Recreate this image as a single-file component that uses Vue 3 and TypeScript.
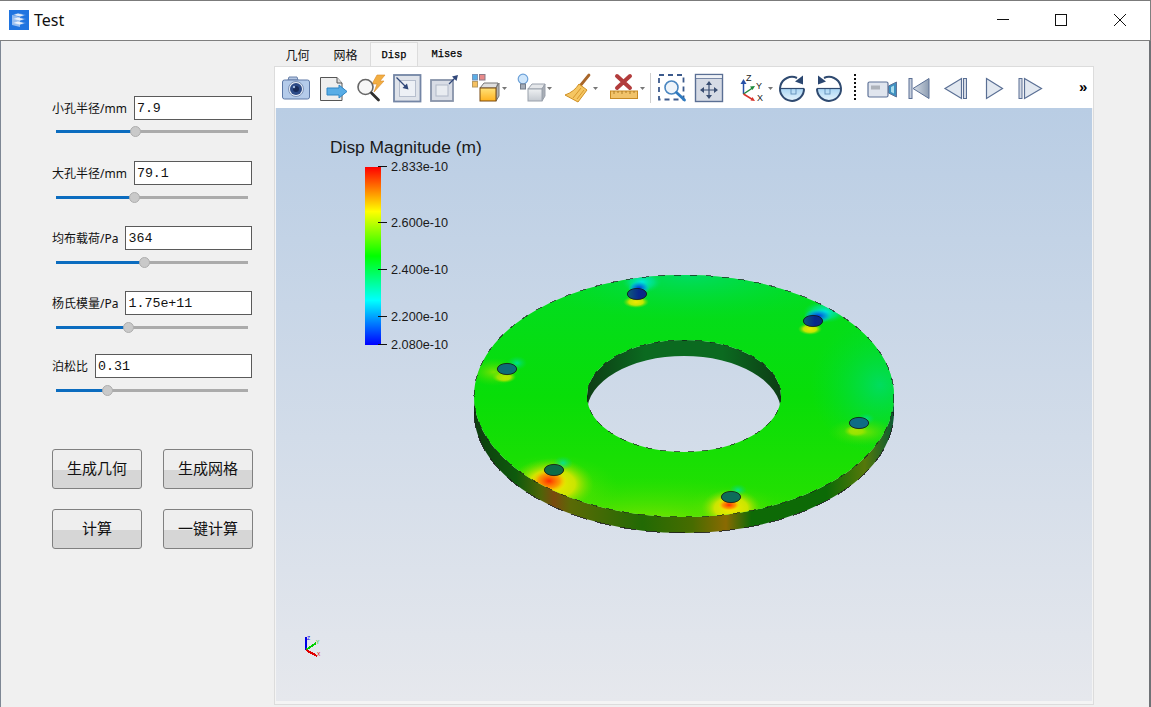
<script setup lang="ts">
interface Param { label: string; value: string; pos: number }
const params: Param[] = [
  { label: '小孔半径/mm', value: '7.9', pos: 79 },
  { label: '大孔半径/mm', value: '79.1', pos: 78 },
  { label: '均布载荷/Pa', value: '364', pos: 88 },
  { label: '杨氏模量/Pa', value: '1.75e+11', pos: 72 },
  { label: '泊松比', value: '0.31', pos: 51 },
]
const actions: string[] = ['生成几何', '生成网格', '计算', '一键计算']
const tabs: string[] = ['几何', '网格', 'Disp', 'Mises']
const ticks = [
  { y: 166, label: '2.833e-10' },
  { y: 222, label: '2.600e-10' },
  { y: 269, label: '2.400e-10' },
  { y: 316, label: '2.200e-10' },
  { y: 344, label: '2.080e-10' },
]
const holes = [
  { x: 637, y: 294, fill: 'url(#hBlue)' },
  { x: 813, y: 321, fill: 'url(#hBlue)' },
  { x: 507, y: 369, fill: '#0e6c78' },
  { x: 859, y: 423, fill: '#0e6c84' },
  { x: 554, y: 470, fill: '#0e6c48' },
  { x: 731, y: 497, fill: '#0e6c5a' },
]
const blobs = [
  { x: 690, y: 276, rx: 170, ry: 44, fill: 'url(#bTeal)' },
  { x: 880, y: 385, rx: 70, ry: 70, fill: 'url(#bTeal)' },
  { x: 650, y: 525, rx: 180, ry: 48, fill: 'url(#bLime)' },
  { x: 642, y: 282, rx: 20, ry: 11, fill: 'url(#bCyan)' },
  { x: 639, y: 288, rx: 11, ry: 7, fill: 'url(#bBlue)' },
  { x: 636, y: 302, rx: 13, ry: 6, fill: 'url(#bYellow)' },
  { x: 825, y: 312, rx: 22, ry: 11, fill: 'url(#bCyan)' },
  { x: 818, y: 316, rx: 14, ry: 7, fill: 'url(#bBlue)' },
  { x: 810, y: 329, rx: 12, ry: 6, fill: 'url(#bYellow)' },
  { x: 517, y: 363, rx: 10, ry: 7, fill: 'url(#bCyanSoft)' },
  { x: 504, y: 377, rx: 12, ry: 6, fill: 'url(#bYellow)' },
  { x: 494, y: 372, rx: 26, ry: 14, fill: 'url(#bLime)' },
  { x: 866, y: 419, rx: 9, ry: 6, fill: 'url(#bCyanSoft)' },
  { x: 856, y: 431, rx: 12, ry: 6, fill: 'url(#bYellow)' },
  { x: 862, y: 432, rx: 34, ry: 14, fill: 'url(#bLime)' },
  { x: 553, y: 490, rx: 66, ry: 36, fill: 'url(#bLime)' },
  { x: 552, y: 484, rx: 42, ry: 26, fill: 'url(#bYellow)' },
  { x: 549, y: 481, rx: 18, ry: 12, fill: 'url(#bRed)' },
  { x: 563, y: 463, rx: 10, ry: 7, fill: 'url(#bCyanSoft)' },
  { x: 731, y: 512, rx: 50, ry: 26, fill: 'url(#bLime)' },
  { x: 731, y: 508, rx: 30, ry: 19, fill: 'url(#bYellow)' },
  { x: 729, y: 505, rx: 11, ry: 6, fill: 'url(#bRed)' },
  { x: 738, y: 490, rx: 9, ry: 6, fill: 'url(#bCyanSoft)' },
]
</script>

<template>
  <div class="window">
    <header class="titlebar">
      <svg class="app-icon" width="20" height="20" viewBox="0 0 20 20">
        <rect width="20" height="20" fill="#1f74e0" />
        <path d="M3 5l6-2 8 2-6 2zM3 9l6-2 8 2-6 2zM3 13l6-2 8 2-6 2z" fill="#dfeaf8" stroke="#1f74e0" stroke-width=".7" />
        <path d="M3 5v10l8 2V7z" fill="#f4f8fd" opacity=".55" />
      </svg>
      <span class="title">Test</span>
      <div class="controls">
        <div class="ctl">
          <svg width="14" height="14" viewBox="0 0 14 14"><path d="M1 6.500h12" stroke="#111" fill="none" /></svg>
        </div>
        <div class="ctl">
          <svg width="14" height="14" viewBox="0 0 14 14"><rect x="1.500" y="1.500" width="11" height="11" stroke="#111" fill="none" /></svg>
        </div>
        <div class="ctl">
          <svg width="14" height="14" viewBox="0 0 14 14"><path d="M1 1l12 12M13 1L1 13" stroke="#111" fill="none" /></svg>
        </div>
      </div>
    </header>

    <div class="body">
      <aside class="side">
        <div v-for="p in params" :key="p.label" class="param">
          <div class="row">
            <label class="label">{{ p.label }}</label>
            <div class="field">{{ p.value }}</div>
          </div>
          <div class="slider">
            <div class="track-on" :style="{ width: p.pos + 'px' }"></div>
            <div class="thumb" :style="{ left: p.pos - 5 + 'px' }"></div>
          </div>
        </div>
        <div class="actions">
          <button v-for="a in actions" :key="a" class="btn">{{ a }}</button>
        </div>
      </aside>

      <main class="main">
        <nav class="tabs">
          <div v-for="t in tabs" :key="t" class="tab" :class="{ active: t === 'Disp', latin: t === 'Disp' || t === 'Mises' }">{{ t }}</div>
        </nav>
        <section class="pane">
          <div class="toolbar">
            <svg class="tool" width="36" height="32" viewBox="279 71 36 32">
              <path d="M288 79l1-3h8l1 3z" fill="#b4c6e2" stroke="#6b82aa" />
              <rect x="282.500" y="79" width="27" height="19" rx="2" fill="#b4cbea" stroke="#5e79a6" />
              <circle cx="296" cy="88" r="7.500" fill="#e8edf5" stroke="#7d93b8" />
              <circle cx="296" cy="88" r="6" fill="#2c4a86" />
              <circle cx="296" cy="88" r="3" fill="#172a58" />
              <circle cx="294" cy="86" r="1.200" fill="#9db8e0" />
            </svg>
            <svg class="tool" width="37" height="32" viewBox="315 71 37 32">
              <path d="M320.500 76.500H337l5 5.500v17.500h-21.500z" fill="#eeeeee" stroke="#555" />
              <path d="M337 76.500v5.500h5" fill="#ddd" stroke="#555" />
              <path d="M327 87h12v-3l8 6.500-8 6.500v-3h-12z" fill="#58ade6" stroke="#2f86c5" />
            </svg>
            <svg class="tool" width="37" height="32" viewBox="352 71 37 32">
              <path d="M377 74h8l-5 6h4l-10 11 3-8h-5z" fill="#f2ae42" stroke="#d9892a" stroke-width=".6" />
              <circle cx="365.500" cy="86" r="7.500" fill="#f6f6f6" stroke="#666" stroke-width="1.600" />
              <path d="M371.500 92l7 7" stroke="#2f2f2f" stroke-width="2.800" stroke-linecap="round" />
            </svg>
            <svg class="tool" width="37" height="32" viewBox="389 71 37 32">
              <rect x="394" y="74" width="26.500" height="26.500" fill="#dfe3ea" stroke="#7385a5" stroke-width="1.800" />
              <rect x="399.500" y="79.500" width="16" height="16" fill="#edf0f5" stroke="#b6becd" />
              <path d="M396.500 76.500l10 10" stroke="#31487a" stroke-width="1.300" />
              <path d="M408.500 88.500l-6-1.500 4.500-4.500z" fill="#31487a" />
            </svg>
            <svg class="tool" width="40" height="32" viewBox="426 71 40 32">
              <rect x="431" y="79" width="22" height="21" fill="#d9dde6" stroke="#8793a9" stroke-width="1.800" />
              <rect x="436" y="84" width="12" height="11" fill="#e9ecf1" stroke="#b1b9c8" />
              <path d="M449 83l6-6" stroke="#31487a" stroke-width="1.300" />
              <path d="M458 74l-1.500 6-4.500-4.500z" fill="#31487a" />
            </svg>
            <svg class="tool" width="48" height="32" viewBox="466 71 48 32">
              <rect x="472.500" y="73.500" width="5" height="5.500" fill="#5aaee6" stroke="#7a94b8" />
              <rect x="479.500" y="73.500" width="5.500" height="5.500" fill="#e88a8a" stroke="#8a7a88" />
              <rect x="472.500" y="80.500" width="5" height="5.500" fill="#f5c060" stroke="#b89a60" />
              <path d="M480 87l4-5h14l-2 5z" fill="#dfdfdf" stroke="#777" />
              <path d="M496 87l3-5v13l-3 5z" fill="#b3b3b3" stroke="#777" />
              <rect x="480" y="87" width="16" height="13" fill="url(#tYellow)" stroke="#7a4a10" />
              <path d="M502 86h5l-2.500 3z" fill="#777" />
              <defs>
                <linearGradient id="tYellow" x1="0" y1="0" x2="0" y2="1"><stop offset="0" stop-color="#ffe27a" /><stop offset="1" stop-color="#ffb21e" /></linearGradient>
              </defs>
            </svg>
            <svg class="tool" width="46" height="32" viewBox="514 71 46 32">
              <circle cx="523" cy="78" r="4.800" fill="#cfe6fb" stroke="#6ba0d8" stroke-width="1.200" />
              <rect x="520.500" y="83" width="5" height="5" fill="#a6adb8" stroke="#747c88" />
              <path d="M528 88l4-5h13l-3 5z" fill="#e5e7ea" stroke="#9aa1ac" />
              <path d="M542 88l3-5v12l-3 5z" fill="#a9aeb6" stroke="#9aa1ac" />
              <rect x="528" y="88" width="14" height="12" fill="url(#tGrey)" stroke="#9aa1ac" />
              <path d="M547 86h5l-2.500 3z" fill="#777" />
              <defs>
                <linearGradient id="tGrey" x1="0" y1="0" x2="0" y2="1"><stop offset="0" stop-color="#eef0f2" /><stop offset="1" stop-color="#c4c9d0" /></linearGradient>
              </defs>
            </svg>
            <svg class="tool" width="46" height="32" viewBox="560 71 46 32">
              <path d="M589 74l-9 11" stroke="#a8662a" stroke-width="2.800" stroke-linecap="round" />
              <path d="M579 83l8 6-9 12-13-7c6-2 11-6 14-11z" fill="#f5c662" stroke="#cf8f22" />
              <path d="M581 87l-8 10M584 89l-7 9" stroke="#d8982c" />
              <path d="M593 86h5l-2.500 3z" fill="#777" />
            </svg>
            <svg class="tool" width="42" height="32" viewBox="606 71 42 32">
              <path d="M617 75l13 12M630 75L617 87" stroke="#b23c3c" stroke-width="4" stroke-linecap="round" />
              <rect x="610.500" y="90" width="27" height="7.500" fill="#f1c36a" stroke="#c78a24" />
              <path d="M614 90v3M618 90v2M622 90v3M626 90v2M630 90v3M634 90v2" stroke="#a06c18" stroke-width=".8" />
              <path d="M640 86h5l-2.500 3z" fill="#777" />
            </svg>
            <div class="sep"></div>
            <svg class="tool" width="36" height="32" viewBox="654 71 36 32">
              <rect x="659" y="74" width="24.500" height="24.500" fill="none" stroke="#3c5a8c" stroke-width="1.800" stroke-dasharray="5 4" />
              <circle cx="671.500" cy="86.500" r="6.500" fill="#eef4fa" stroke="#4a86c0" stroke-width="1.600" />
              <path d="M676.500 91.500l8 7.500" stroke="#2f7abf" stroke-width="2.800" stroke-linecap="round" />
            </svg>
            <svg class="tool" width="40" height="32" viewBox="690 71 40 32">
              <rect x="695.500" y="73.500" width="27" height="27" fill="#d6dbe5" stroke="#5a6f94" stroke-width="1.400" />
              <path d="M696 77.500h26" stroke="#5a6f94" />
              <rect x="696.200" y="74.200" width="25.600" height="3" fill="#eef1f6" />
              <path d="M709 82v14M702 89h14" stroke="#3a4e72" stroke-width="1.200" />
              <path d="M709 80l-3 4h6zM709 98l-3-4h6zM700 89l4-3v6zM718 89l-4-3v6z" fill="#3a4e72" />
            </svg>
            <svg class="tool" width="45" height="32" viewBox="730 71 45 32">
              <path d="M743.500 93V81" stroke="#2850a8" stroke-width="1.500" />
              <path d="M743.500 78l-3 5h6z" fill="#2850a8" />
              <path d="M743.500 93l9-6" stroke="#1e8a3c" stroke-width="1.500" />
              <path d="M755 85l-5 .5 2.500 3.500z" fill="#1e8a3c" />
              <path d="M743.500 93l9 5.500" stroke="#d8342c" stroke-width="1.500" />
              <path d="M755 100l-4.500-.5 2-3.500z" fill="#d8342c" />
              <text x="746" y="80" class="ax">Z</text>
              <text x="756" y="88" class="ax">Y</text>
              <text x="757" y="100" class="ax">X</text>
              <path d="M768 86h5l-2.500 3z" fill="#777" />
            </svg>
            <svg class="tool" width="36" height="32" viewBox="775 71 36 32">
              <defs>
                <linearGradient id="tBlue" x1="0" y1="0" x2="0" y2="1"><stop offset="0" stop-color="#a9d6f4" /><stop offset="1" stop-color="#e4f3fc" /></linearGradient>
              </defs>
              <path d="M780 87.500h24a12 12 0 0 1-24 0z" fill="url(#tBlue)" />
              <rect x="791" y="87.500" width="5" height="5.500" fill="none" stroke="#5f8fb8" stroke-width=".9" />
              <path d="M780 87.500h24" stroke="#2f4a70" stroke-width="1.200" />
              <path d="M797 77a12 12 0 1 0 7 10.500" fill="none" stroke="#2f4a70" stroke-width="2" />
              <path d="M803 74.500v9l-8-3z" fill="#2a4670" />
            </svg>
            <svg class="tool" width="37" height="32" viewBox="811 71 37 32">
              <g transform="translate(1621 0) scale(-1 1)">
                <path d="M780 87.500h24a12 12 0 0 1-24 0z" fill="url(#tBlue)" />
                <rect x="791" y="87.500" width="5" height="5.500" fill="none" stroke="#5f8fb8" stroke-width=".9" />
                <path d="M780 87.500h24" stroke="#2f4a70" stroke-width="1.200" />
                <path d="M797 77a12 12 0 1 0 7 10.500" fill="none" stroke="#2f4a70" stroke-width="2" />
                <path d="M803 74.500v9l-8-3z" fill="#2a4670" />
              </g>
            </svg>
            <svg class="tool" width="14" height="32" viewBox="848 71 14 32">
              <path d="M855 73v26" stroke="#111" stroke-width="2" stroke-dasharray="2 2" />
            </svg>
            <svg class="tool" width="40" height="32" viewBox="862 71 40 32">
              <rect x="868" y="81" width="20" height="15" rx="1.500" fill="#e0e5ee" stroke="#5f7398" stroke-width="1.200" />
              <rect x="871" y="84.500" width="9" height="4" fill="#adb2ba" />
              <path d="M888.500 85l8-4v15l-8-4z" fill="#3d8fbf" stroke="#5f7398" />
              <path d="M891 86l3-1.500v8l-3-1.500z" fill="#a8dcec" />
            </svg>
            <svg class="tool" width="36" height="32" viewBox="902 71 36 32">
              <rect x="909" y="77.500" width="3" height="20" fill="#c8d0de" stroke="#5a6f94" />
              <path d="M913 87.500l16-10v20z" fill="url(#tSteel)" stroke="#5a6f94" />
              <defs>
                <linearGradient id="tSteel" x1="0" y1="0" x2="1" y2="0"><stop offset="0" stop-color="#d8dfe8" /><stop offset="1" stop-color="#8d9db2" /></linearGradient>
              </defs>
            </svg>
            <svg class="tool" width="38" height="32" viewBox="938 71 38 32">
              <path d="M945 87.500l16.500-10v20z" fill="#e2e8f0" stroke="#5a6f94" stroke-width="1.200" />
              <rect x="963.500" y="77.500" width="3" height="20" fill="#d5dbe6" stroke="#5a6f94" />
            </svg>
            <svg class="tool" width="36" height="32" viewBox="976 71 36 32">
              <path d="M986.500 77.500l16 10-16 10z" fill="#e2e8f0" stroke="#5a6f94" stroke-width="1.200" />
            </svg>
            <svg class="tool" width="36" height="32" viewBox="1012 71 36 32">
              <rect x="1019" y="77.500" width="3" height="20" fill="#d5dbe6" stroke="#5a6f94" />
              <path d="M1024.500 77.500l17 10-17 10z" fill="#e2e8f0" stroke="#5a6f94" stroke-width="1.200" />
            </svg>
            <span class="more">»</span>
          </div>

          <div class="viewport">
            <svg class="scene" width="816" height="593" viewBox="276 108 816 593">
              <defs>
                <linearGradient id="bg" x1="0" y1="0" x2="0" y2="1">
                  <stop offset="0" stop-color="#b9cde4" />
                  <stop offset="1" stop-color="#e6e8ed" />
                </linearGradient>
                <linearGradient id="cbar" x1="0" y1="0" x2="0" y2="1">
                  <stop offset="0" stop-color="#ff0000" />
                  <stop offset=".25" stop-color="#ffff00" />
                  <stop offset=".5" stop-color="#00ff00" />
                  <stop offset=".75" stop-color="#00ffff" />
                  <stop offset="1" stop-color="#0000ff" />
                </linearGradient>
                <linearGradient id="face" x1="0" y1="0" x2="0" y2="1">
                  <stop offset="0" stop-color="#02dc22" />
                  <stop offset=".5" stop-color="#08de08" />
                  <stop offset="1" stop-color="#28e000" />
                </linearGradient>
                <linearGradient id="rim" gradientUnits="userSpaceOnUse" x1="474" y1="0" x2="894" y2="0">
                  <stop offset="0" stop-color="#0e3c10" />
                  <stop offset=".1" stop-color="#0e5a0c" />
                  <stop offset=".16" stop-color="#4e6408" />
                  <stop offset=".19" stop-color="#7a4a0e" />
                  <stop offset=".23" stop-color="#5a6a06" />
                  <stop offset=".4" stop-color="#226a04" />
                  <stop offset=".52" stop-color="#476c00" />
                  <stop offset=".6" stop-color="#8a6a02" />
                  <stop offset=".66" stop-color="#0e6a06" />
                  <stop offset=".84" stop-color="#0c6a06" />
                  <stop offset=".93" stop-color="#55780a" />
                  <stop offset="1" stop-color="#0a5a34" />
                </linearGradient>
                <linearGradient id="wall" gradientUnits="userSpaceOnUse" x1="587" y1="0" x2="781" y2="0">
                  <stop offset="0" stop-color="#0d3d14" />
                  <stop offset=".3" stop-color="#0b6a20" />
                  <stop offset=".7" stop-color="#0b6a20" />
                  <stop offset="1" stop-color="#0d3d14" />
                </linearGradient>
                <linearGradient id="hBlue" x1="0" y1="0" x2="1" y2="0">
                  <stop offset="0" stop-color="#0e5a7a" />
                  <stop offset=".6" stop-color="#08288c" />
                  <stop offset="1" stop-color="#0a2a80" />
                </linearGradient>
                <radialGradient id="bYellow"><stop offset="0" stop-color="#f5e800" /><stop offset=".55" stop-color="#d8e600" stop-opacity=".9" /><stop offset="1" stop-color="#70e000" stop-opacity="0" /></radialGradient>
                <radialGradient id="bLime"><stop offset="0" stop-color="#90e400" stop-opacity=".85" /><stop offset="1" stop-color="#40e000" stop-opacity="0" /></radialGradient>
                <radialGradient id="bTeal"><stop offset="0" stop-color="#00dc68" stop-opacity=".9" /><stop offset="1" stop-color="#00dc30" stop-opacity="0" /></radialGradient>
                <radialGradient id="bRed"><stop offset="0" stop-color="#ff2a00" /><stop offset=".6" stop-color="#ff8a00" stop-opacity=".8" /><stop offset="1" stop-color="#ffe000" stop-opacity="0" /></radialGradient>
                <radialGradient id="bCyan"><stop offset="0" stop-color="#00e8e0" /><stop offset=".6" stop-color="#00e4a0" stop-opacity=".6" /><stop offset="1" stop-color="#00dc60" stop-opacity="0" /></radialGradient>
                <radialGradient id="bCyanSoft"><stop offset="0" stop-color="#00e0b0" stop-opacity=".8" /><stop offset="1" stop-color="#00dc60" stop-opacity="0" /></radialGradient>
                <radialGradient id="bBlue"><stop offset="0" stop-color="#0030e0" /><stop offset=".6" stop-color="#0098e8" stop-opacity=".7" /><stop offset="1" stop-color="#00d8e0" stop-opacity="0" /></radialGradient>
                <clipPath id="top">
                  <path clip-rule="evenodd" d="M474 396a210 121 0 1 0 420 0a210 121 0 1 0-420 0zM587 396a97 56 0 1 0 194 0a97 56 0 1 0-194 0z" />
                </clipPath>
              </defs>
              <rect x="276" y="108" width="816" height="593" fill="url(#bg)" />

              <path d="M474 396a210 121 0 0 0 420 0v16a210 121 0 0 1-420 0z" fill="url(#rim)" />
              <path d="M474 412a210 121 0 0 0 420 0" fill="none" stroke="#161616" opacity=".8" shape-rendering="crispEdges" stroke-dasharray="16 9" />
              <path d="M587 396a97 56 0 0 1 194 0v16a97 56 0 0 0-194 0z" fill="url(#wall)" />

              <g clip-path="url(#top)">
                <rect x="474" y="275" width="420" height="242" fill="url(#face)" />
                <ellipse v-for="(b, i) in blobs" :key="i" :cx="b.x" :cy="b.y" :rx="b.rx" :ry="b.ry" :fill="b.fill" />
              </g>
              <g fill="none" stroke="#141414" opacity=".65" shape-rendering="crispEdges">
                <ellipse cx="684" cy="396" rx="210" ry="121" stroke-dasharray="7 9" />
                <ellipse cx="684" cy="396" rx="97" ry="56" stroke-dasharray="6 8" />
              </g>
              <ellipse v-for="h in holes" :key="h.x" :cx="h.x" :cy="h.y" rx="9.700" ry="5.600" :fill="h.fill" stroke="#121212" stroke-width=".8" />

              <text x="330" y="152.500" class="legend-title">Disp Magnitude (m)</text>
              <rect x="365" y="167" width="16" height="178" fill="url(#cbar)" />
              <g v-for="t in ticks" :key="t.label">
                <path :d="`M378 ${t.y + 0.5}h9`" stroke="#111" />
                <text x="391" :y="t.y + 4.500" class="legend-label">{{ t.label }}</text>
              </g>

              <path d="M306 650v-13" stroke="#0000e6" stroke-width="2" shape-rendering="crispEdges" />
              <path d="M306 650l10-7" stroke="#00d000" stroke-width="2" shape-rendering="crispEdges" />
              <path d="M306 650l11 6" stroke="#e00000" stroke-width="2" shape-rendering="crispEdges" />
              <text x="307" y="640" class="tiny" fill="#0000e6">Z</text>
              <text x="316" y="644" class="tiny" fill="#00c000">Y</text>
              <text x="317" y="656" class="tiny" fill="#e00000">X</text>
            </svg>
          </div>
        </section>
      </main>
    </div>
  </div>
</template>

<style scoped>
.window {
  width: 1151px;
  height: 707px;
  display: flex;
  flex-direction: column;
  background: #fff;
  overflow: hidden;
  font-family: "Noto Sans", "Noto Sans CJK SC", sans-serif;
  color: #000;
}
.titlebar {
  height: 38px;
  flex: none;
  display: flex;
  align-items: center;
  padding-left: 9px;
  border-top: 1px solid #7b7b7b;
  border-bottom: 1px solid #7f7f7f;
  border-right: 1px solid #7f7f7f;
  padding-top: 1px;
}
.app-icon { display: block; margin-top: -2px; }
.title { margin-left: 5px; font-size: 16px; color: #111; margin-top: -3px; }
.controls { margin-left: auto; display: flex; height: 100%; padding-right: 1px; }
.ctl { width: 58.500px; display: flex; align-items: center; justify-content: center; margin-top: -3px; }

.body {
  flex: 1;
  display: flex;
  min-height: 0;
  background: #f0f0f0;
  border-left: 1px solid #7e8794;
  border-right: 2px solid #6f7276;
}
.side {
  width: 273px;
  flex: none;
  box-sizing: border-box;
  padding-top: 55px;
  display: flex;
  flex-direction: column;
}
.param { height: 65px; padding-left: 51px; width: 200px; }
.param:nth-child(4) { height: 63px; }
.param:nth-child(5) { height: 95px; }
.row { display: flex; align-items: center; gap: 7px; height: 24px; }
.label { font-size: 12px; white-space: nowrap; color: #111; margin-top: -1px; }
.field {
  flex: 1;
  min-width: 0;
  height: 24px;
  box-sizing: border-box;
  background: #fff;
  border: 1px solid #5a5a5a;
  padding: 3px 0 0 2px;
  font-family: "Liberation Mono", monospace;
  font-size: 13.300px;
  line-height: 18px;
  color: #111;
}
.slider {
  position: relative;
  margin: 11px 0 0 4px;
  width: 192px;
  height: 3px;
  background: #ababab;
}
.param:first-child .slider { margin-top: 10px; }
.track-on { height: 3px; background: #0b6cbf; }
.thumb {
  position: absolute;
  top: -4px;
  width: 11px;
  height: 11px;
  box-sizing: border-box;
  border-radius: 50%;
  background: #c9c9c9;
  border: 1px solid #aeaeae;
}
.actions {
  padding-left: 51px;
  display: grid;
  grid-template-columns: 90px 90px;
  grid-auto-rows: 40px;
  column-gap: 21px;
  row-gap: 20px;
}
.btn {
  margin: 0;
  padding: 0 0 4px;
  box-sizing: border-box;
  border: 1px solid #808080;
  border-radius: 3px;
  background: linear-gradient(#eeeeee 0, #eeeeee 52%, #d6d6d6 52%, #d6d6d6 100%);
  font-family: "Noto Sans CJK SC", sans-serif;
  font-size: 15px;
  color: #111;
}

.main { width: 820px; flex: none; display: flex; flex-direction: column; margin-top: 1px; }
.tabs { display: flex; height: 24px; flex: none; align-items: stretch; }
.tab {
  width: 47px;
  box-sizing: border-box;
  display: flex;
  align-items: center;
  justify-content: center;
  font-size: 12px;
  color: #111;
  font-family: "Noto Sans CJK SC", sans-serif;
}
.tab:nth-child(2) { width: 49px; }
.tab.latin {
  font-family: "Liberation Mono", monospace;
  font-size: 10.400px;
  color: #000;
  -webkit-text-stroke: 0.25px #000;
}
.tab:last-child { width: 58px; }
.tab.active {
  width: 48px;
  background: #f6f6f6;
  border: 1px solid #dcdcdc;
  border-bottom: none;
}
.pane {
  flex: none;
  width: 820px;
  height: 639px;
  box-sizing: border-box;
  border: 1px solid #dcdcdc;
  background: #f4f4f4;
  display: flex;
  flex-direction: column;
}
.toolbar {
  height: 41px;
  flex: none;
  box-sizing: border-box;
  background: #fff;
  display: flex;
  align-items: flex-start;
  padding: 5px 0 0 4px;
}
.tool { display: block; flex: none; }
.ax { font: 9px "Liberation Sans", sans-serif; fill: #222; }
.sep { width: 1px; height: 30px; background: #cfcfcf; margin: 1px 3px 0 2px; flex: none; }
.more {
  margin-left: 31px;
  font: bold 15px "Liberation Sans", sans-serif;
  line-height: 30px;
}
.viewport { flex: none; margin-left: 1px; width: 816px; height: 593px; }
.scene { display: block; }
.legend-title { font: 17.400px "Liberation Sans", sans-serif; fill: #1a1a1a; }
.legend-label { font: 12.700px "Liberation Sans", sans-serif; fill: #1a1a1a; }
.tiny { font: 5px "Liberation Sans", sans-serif; }
</style>

<style>
html, body { margin: 0; background: #fff; overflow: hidden; }
</style>
